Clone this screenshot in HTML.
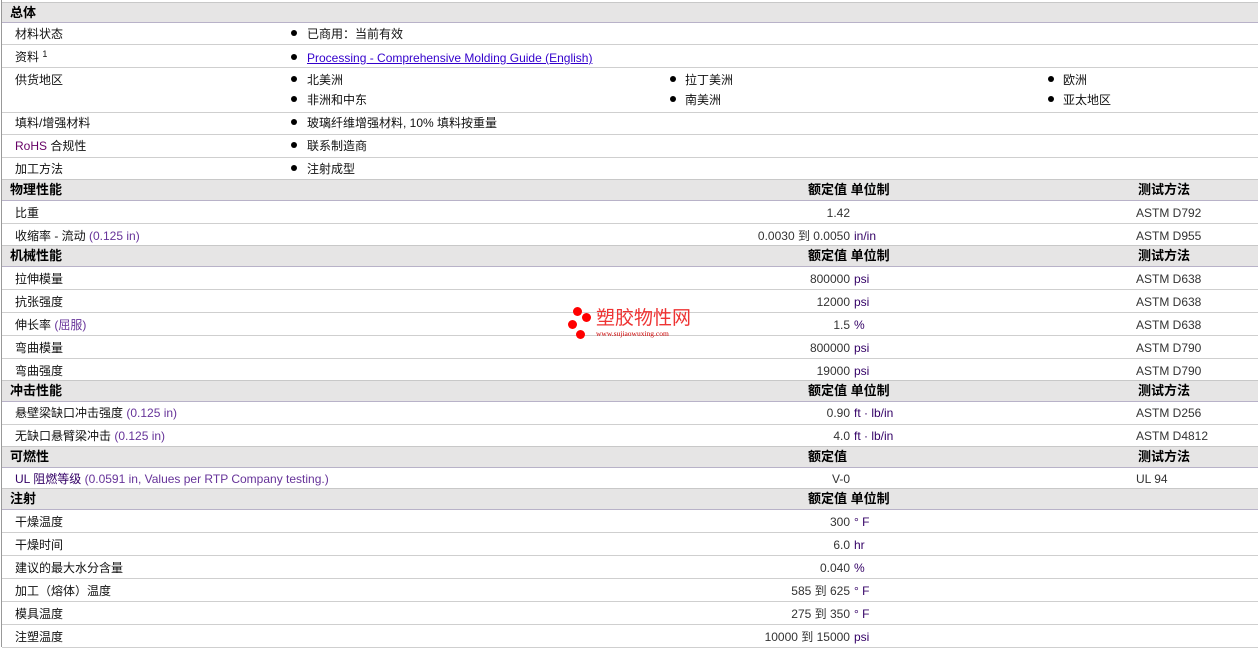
<!DOCTYPE html>
<html><head><meta charset="utf-8"><style>
body{margin:0;width:1258px;height:647px;background:#fff;overflow:hidden;position:relative;font-family:"Liberation Sans","Noto Sans CJK SC",sans-serif;font-size:12px;color:#111}
.lb{position:absolute;left:1px;top:0;width:1px;height:647px;background:#999}
.h{position:absolute;left:2px;width:1256px;background:#e6e5e5;border-top:1px solid #c8c8c8;border-bottom:1px solid #b8b2c8}
.r{position:absolute;left:2px;width:1256px;border-bottom:1px solid #cfcfcf}
.t{position:absolute;white-space:nowrap;line-height:14px}
.b{font-weight:bold;font-size:13px;color:#000}
.v{right:408px;text-align:right;color:#333}
.u{left:854px;color:#330066}
.m{left:1136px;color:#333}
.p{color:#663399}
.bul{position:absolute;width:6px;height:6px;border-radius:50%;background:#000}
a{color:#3300cc}
</style></head><body>
<div class="lb"></div>
<div class="h" style="top:2px;height:19px"><span class="t b" style="left:8px;top:3px">总体</span></div>
<div class="t" style="left:15px;top:27px">材料状态</div><div class="bul" style="left:291px;top:30px"></div><div class="t" style="left:307px;top:27px">已商用：当前有效</div>
<div class="r" style="top:22px;height:22px"></div>
<div class="r" style="top:45px;height:22px"></div>
<div class="t" style="left:15px;top:50px">资料 <span style="font-size:9px;position:relative;top:-4px">1</span></div><div class="bul" style="left:291px;top:54px"></div><div class="t" style="left:307px;top:51px"><a href="#">Processing - Comprehensive Molding Guide (English)</a></div>
<div class="r" style="top:68px;height:44px"></div>
<div class="t" style="left:15px;top:73px">供货地区</div>
<div class="bul" style="left:291px;top:76px"></div><div class="t" style="left:307px;top:73px">北美洲</div>
<div class="bul" style="left:670px;top:76px"></div><div class="t" style="left:685px;top:73px">拉丁美洲</div>
<div class="bul" style="left:1048px;top:76px"></div><div class="t" style="left:1063px;top:73px">欧洲</div>
<div class="bul" style="left:291px;top:96px"></div><div class="t" style="left:307px;top:93px">非洲和中东</div>
<div class="bul" style="left:670px;top:96px"></div><div class="t" style="left:685px;top:93px">南美洲</div>
<div class="bul" style="left:1048px;top:96px"></div><div class="t" style="left:1063px;top:93px">亚太地区</div>
<div class="r" style="top:113px;height:21px"></div>
<div class="t" style="left:15px;top:116px">填料/增强材料</div><div class="bul" style="left:291px;top:119px"></div><div class="t" style="left:307px;top:116px">玻璃纤维增强材料, 10% 填料按重量</div>
<div class="r" style="top:135px;height:22px"></div>
<div class="t" style="left:15px;top:139px"><span style="color:#660066">RoHS</span> 合规性</div><div class="bul" style="left:291px;top:142px"></div><div class="t" style="left:307px;top:139px">联系制造商</div>
<div class="t" style="left:15px;top:162px">加工方法</div><div class="bul" style="left:291px;top:165px"></div><div class="t" style="left:307px;top:162px">注射成型</div>

<div class="h" style="top:179px;height:20px"><span class="t b" style="left:8px;top:3px">物理性能</span><span class="t b" style="left:806px;top:3px">额定值 单位制</span><span class="t b" style="left:1136px;top:3px">测试方法</span></div>
<div class="r" style="top:201px;height:22px"></div>
<div class="t" style="left:15px;top:206px">比重</div><div class="t v" style="top:206px">1.42</div><div class="t m" style="top:206px">ASTM D792</div>
<div class="t" style="left:15px;top:229px">收缩率 - 流动 <span class="p">(0.125 in)</span></div><div class="t v" style="top:229px">0.0030 到 0.0050</div><div class="t u" style="top:229px">in/in</div><div class="t m" style="top:229px">ASTM D955</div>

<div class="h" style="top:245px;height:20px"><span class="t b" style="left:8px;top:3px">机械性能</span><span class="t b" style="left:806px;top:3px">额定值 单位制</span><span class="t b" style="left:1136px;top:3px">测试方法</span></div>
<div class="r" style="top:267px;height:22px"></div>
<div class="r" style="top:290px;height:22px"></div>
<div class="r" style="top:313px;height:22px"></div>
<div class="r" style="top:336px;height:22px"></div>
<div class="t" style="left:15px;top:272px">拉伸模量</div><div class="t v" style="top:272px">800000</div><div class="t u" style="top:272px">psi</div><div class="t m" style="top:272px">ASTM D638</div>
<div class="t" style="left:15px;top:295px">抗张强度</div><div class="t v" style="top:295px">12000</div><div class="t u" style="top:295px">psi</div><div class="t m" style="top:295px">ASTM D638</div>
<div class="t" style="left:15px;top:318px">伸长率 <span class="p">(屈服)</span></div><div class="t v" style="top:318px">1.5</div><div class="t u" style="top:318px">%</div><div class="t m" style="top:318px">ASTM D638</div>
<div class="t" style="left:15px;top:341px">弯曲模量</div><div class="t v" style="top:341px">800000</div><div class="t u" style="top:341px">psi</div><div class="t m" style="top:341px">ASTM D790</div>
<div class="t" style="left:15px;top:364px">弯曲强度</div><div class="t v" style="top:364px">19000</div><div class="t u" style="top:364px">psi</div><div class="t m" style="top:364px">ASTM D790</div>

<div class="h" style="top:380px;height:20px"><span class="t b" style="left:8px;top:3px">冲击性能</span><span class="t b" style="left:806px;top:3px">额定值 单位制</span><span class="t b" style="left:1136px;top:3px">测试方法</span></div>
<div class="r" style="top:402px;height:22px"></div>
<div class="t" style="left:15px;top:406px">悬壁梁缺口冲击强度 <span class="p">(0.125 in)</span></div><div class="t v" style="top:406px">0.90</div><div class="t u" style="top:406px">ft · lb/in</div><div class="t m" style="top:406px">ASTM D256</div>
<div class="t" style="left:15px;top:429px">无缺口悬臂梁冲击 <span class="p">(0.125 in)</span></div><div class="t v" style="top:429px">4.0</div><div class="t u" style="top:429px">ft · lb/in</div><div class="t m" style="top:429px">ASTM D4812</div>

<div class="h" style="top:446px;height:20px"><span class="t b" style="left:8px;top:3px">可燃性</span><span class="t b" style="left:806px;top:3px">额定值</span><span class="t b" style="left:1136px;top:3px">测试方法</span></div>
<div class="t" style="left:15px;top:472px"><span style="color:#330066">UL 阻燃等级</span> <span class="p">(0.0591 in, Values per RTP Company testing.)</span></div><div class="t v" style="top:472px">V-0</div><div class="t m" style="top:472px">UL 94</div>

<div class="h" style="top:488px;height:20px"><span class="t b" style="left:8px;top:3px">注射</span><span class="t b" style="left:806px;top:3px">额定值 单位制</span></div>
<div class="r" style="top:510px;height:22px"></div>
<div class="r" style="top:533px;height:22px"></div>
<div class="r" style="top:556px;height:22px"></div>
<div class="r" style="top:579px;height:22px"></div>
<div class="r" style="top:602px;height:22px"></div>
<div class="r" style="top:625px;height:22px"></div>
<div class="t" style="left:15px;top:515px">干燥温度</div><div class="t v" style="top:515px">300</div><div class="t u" style="top:515px">° F</div>
<div class="t" style="left:15px;top:538px">干燥时间</div><div class="t v" style="top:538px">6.0</div><div class="t u" style="top:538px">hr</div>
<div class="t" style="left:15px;top:561px">建议的最大水分含量</div><div class="t v" style="top:561px">0.040</div><div class="t u" style="top:561px">%</div>
<div class="t" style="left:15px;top:584px">加工（熔体）温度</div><div class="t v" style="top:584px">585 到 625</div><div class="t u" style="top:584px">° F</div>
<div class="t" style="left:15px;top:607px">模具温度</div><div class="t v" style="top:607px">275 到 350</div><div class="t u" style="top:607px">° F</div>
<div class="t" style="left:15px;top:630px">注塑温度</div><div class="t v" style="top:630px">10000 到 15000</div><div class="t u" style="top:630px">psi</div>

<div style="position:absolute;left:565px;top:307px;width:135px;height:34px">
<div class="bul" style="background:#f00;width:9px;height:9px;left:8px;top:0"></div>
<div class="bul" style="background:#f00;width:9px;height:9px;left:17px;top:6px"></div>
<div class="bul" style="background:#f00;width:9px;height:9px;left:3px;top:13px"></div>
<div class="bul" style="background:#f00;width:9px;height:9px;left:11px;top:23px"></div>
<div class="t" style="left:31px;top:1px;font-size:19px;line-height:22px;color:#e33">塑胶物性网</div>
<div class="t" style="left:31px;top:23px;font-size:7.5px;line-height:8px;color:#c00;font-family:'Liberation Serif',serif">www.sujiaowuxing.com</div>
</div>
</body></html>
